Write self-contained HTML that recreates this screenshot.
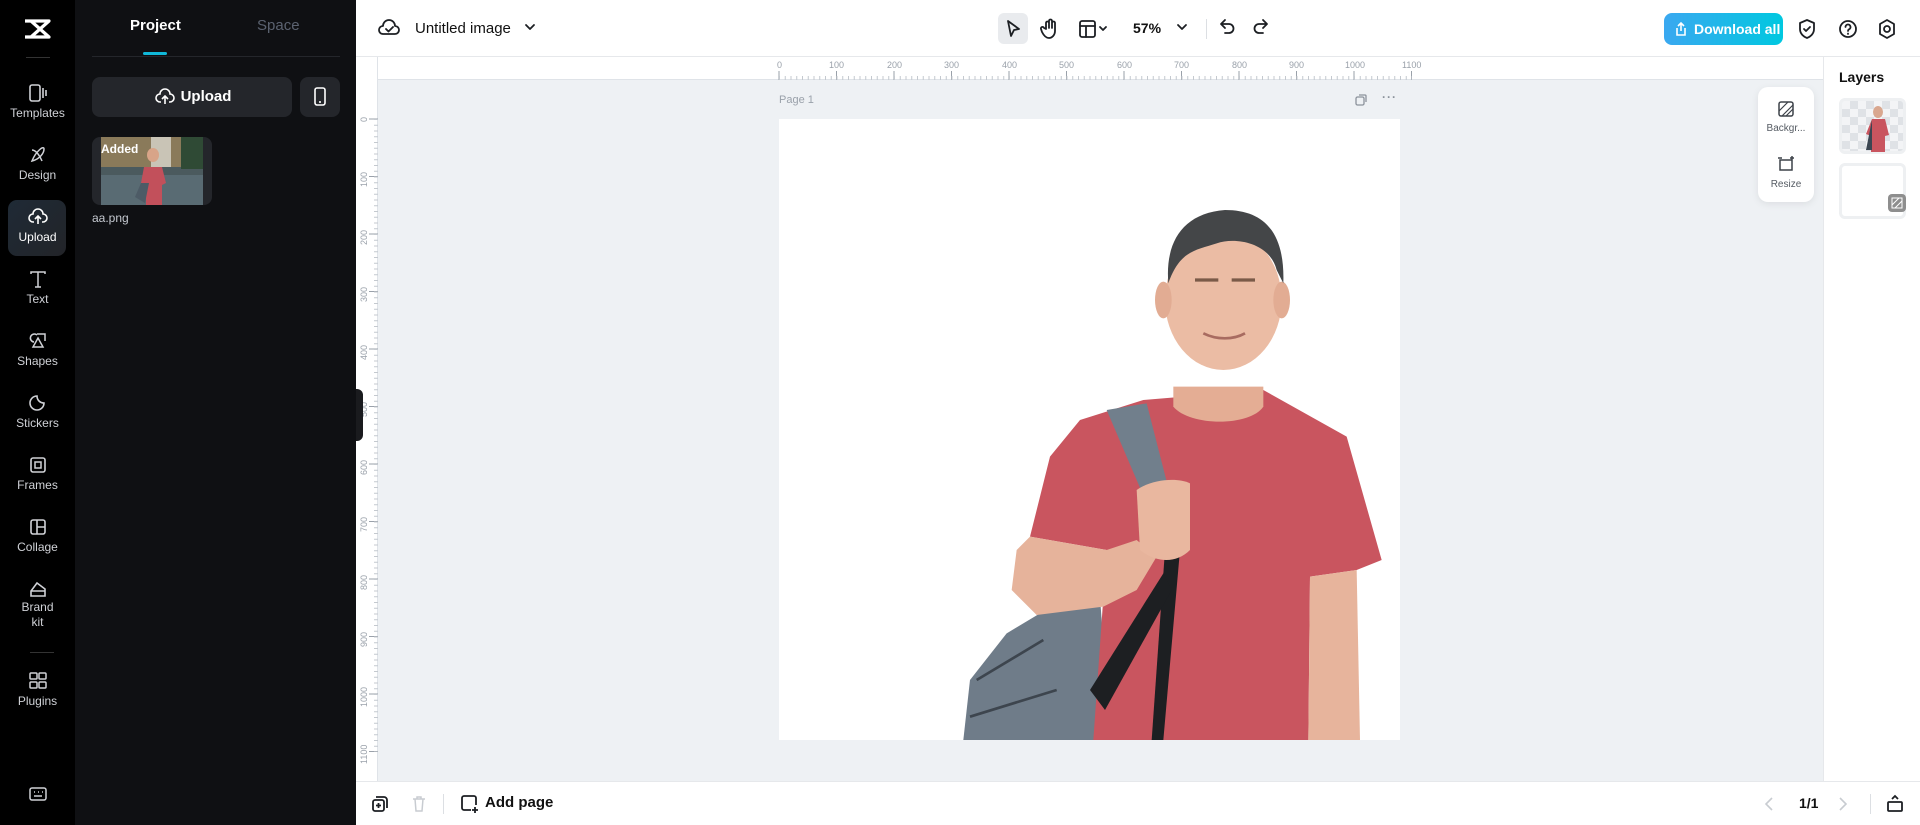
<!DOCTYPE html>
<html><head><meta charset="utf-8"><style>
*{box-sizing:border-box;margin:0;padding:0}
body{width:1920px;height:825px;overflow:hidden;position:relative;font-family:"Liberation Sans",sans-serif;background:#eef1f4}
.a{position:absolute}
.nav{left:0;top:0;width:75px;height:825px;background:#000}
.ni{position:absolute;left:0;width:75px;text-align:center;color:#cfd1d6;font-size:12px}
.ni svg{display:block;margin:0 auto 4px}
.panel{left:75px;top:0;width:281px;height:825px;background:#0f1013}
.top{left:356px;top:0;width:1564px;height:57px;background:#fff;border-bottom:1px solid #e6e8eb}
.tx{font-size:15px;color:#111}
.ic{stroke:#1c1f23;fill:none;stroke-width:1.8;stroke-linecap:round;stroke-linejoin:round}
.bottom{left:356px;top:781px;width:1564px;height:44px;background:#fff;border-top:1px solid #e6e8eb}
.rp{left:1823px;top:57px;width:97px;height:724px;background:#fff;border-left:1px solid #e6e8eb}
</style></head><body>
<div class="a nav">
 <svg class="a" style="left:22px;top:18px" width="30" height="22" viewBox="0 0 30 22"><path d="M3 3h24L9 19h18M3 19h24L9 3" fill="none" stroke="#fff" stroke-width="3.2" stroke-linejoin="round"/></svg>
 <div class="a" style="left:26px;top:57px;width:24px;height:1px;background:#333"></div>
 <div class="ni" style="top:84px"><svg width="20" height="18" viewBox="0 0 20 18"><rect x="2" y="1" width="10" height="16" rx="2" fill="none" stroke="#cfd1d6" stroke-width="1.6"/><path d="M15 4v10M18 6v6" stroke="#cfd1d6" stroke-width="1.6"/></svg>Templates</div>
 <div class="ni" style="top:146px"><svg width="20" height="18" viewBox="0 0 20 18"><path d="M4 15c8-2 12-8 12-12S8 5 4 15zM4 4c4 0 8 6 10 11" fill="none" stroke="#cfd1d6" stroke-width="1.5"/></svg>Design</div>
 <div class="a" style="left:8px;top:200px;width:58px;height:56px;border-radius:9px;background:linear-gradient(135deg,#1f2a36,#222428)"></div>
 <div class="ni" style="top:208px;color:#fff"><svg width="20" height="18" viewBox="0 0 20 18"><path d="M6 14H5a4 4 0 0 1 0-8 5 5 0 0 1 10 0 4 4 0 0 1 0 8h-1M10 16V9M7 11l3-3 3 3" fill="none" stroke="#fff" stroke-width="1.6"/></svg>Upload</div>
 <div class="ni" style="top:270px"><svg width="20" height="18" viewBox="0 0 20 18"><path d="M3 4V2h14v2M10 2v15M7 17h6" fill="none" stroke="#cfd1d6" stroke-width="1.5"/></svg>Text</div>
 <div class="ni" style="top:332px"><svg width="20" height="18" viewBox="0 0 20 18"><path d="M6 10a4 4 0 1 1 3-7M9 2h8v7M10 6l5 9H5z" fill="none" stroke="#cfd1d6" stroke-width="1.5"/></svg>Shapes</div>
 <div class="ni" style="top:394px"><svg width="20" height="18" viewBox="0 0 20 18"><path d="M16 9a7 7 0 1 1-7-7c0 4 3 7 7 7z" fill="none" stroke="#cfd1d6" stroke-width="1.6"/></svg>Stickers</div>
 <div class="ni" style="top:456px"><svg width="20" height="18" viewBox="0 0 20 18"><rect x="3" y="2" width="14" height="14" rx="2" fill="none" stroke="#cfd1d6" stroke-width="1.6"/><rect x="7" y="6" width="6" height="6" fill="none" stroke="#cfd1d6" stroke-width="1.5"/></svg>Frames</div>
 <div class="ni" style="top:518px"><svg width="20" height="18" viewBox="0 0 20 18"><rect x="3" y="2" width="14" height="14" rx="2" fill="none" stroke="#cfd1d6" stroke-width="1.6"/><path d="M9 2v14M9 9h8" stroke="#cfd1d6" stroke-width="1.6"/></svg>Collage</div>
 <div class="ni" style="top:580px;line-height:15px"><svg width="20" height="18" viewBox="0 0 20 18" style="margin-bottom:2px"><path d="M3 16V11l6-8 8 6v7zM3 11h14" fill="none" stroke="#cfd1d6" stroke-width="1.6"/></svg>Brand<br>kit</div>
 <div class="a" style="left:30px;top:652px;width:24px;height:1px;background:#333"></div>
 <div class="ni" style="top:672px"><svg width="20" height="18" viewBox="0 0 20 18"><rect x="2" y="1" width="7" height="6" rx="1" fill="none" stroke="#cfd1d6" stroke-width="1.5"/><rect x="11" y="1" width="7" height="6" rx="1" fill="none" stroke="#cfd1d6" stroke-width="1.5"/><rect x="2" y="10" width="7" height="6" rx="1" fill="none" stroke="#cfd1d6" stroke-width="1.5"/><rect x="11" y="10" width="7" height="6" rx="1" fill="none" stroke="#cfd1d6" stroke-width="1.5"/></svg>Plugins</div>
 <svg class="a" style="left:28px;top:786px" width="20" height="16" viewBox="0 0 20 16"><rect x="2" y="2" width="16" height="12" rx="2" fill="none" stroke="#cfd1d6" stroke-width="1.5"/><path d="M6 6h1M10 6h1M14 6h1M6 10h8" stroke="#cfd1d6" stroke-width="1.5"/></svg>
</div>
<div class="a panel">
 <div class="a" style="left:55px;top:17px;width:50px;font-size:15px;font-weight:bold;color:#fff">Project</div>
 <div class="a" style="left:182px;top:17px;font-size:15px;color:#5b6270">Space</div>
 <div class="a" style="left:68px;top:52px;width:24px;height:3px;background:#10b8d8;border-radius:2px"></div>
 <div class="a" style="left:17px;top:56px;width:248px;height:1px;background:#24262b"></div>
 <div class="a" style="left:17px;top:77px;width:200px;height:40px;border-radius:8px;background:#24262b;color:#fff;font-weight:bold;font-size:15px;line-height:40px;text-align:center;padding-left:28px">Upload</div>
 <svg class="a" style="left:80px;top:88px" width="20" height="18" viewBox="0 0 20 18"><path d="M6 14H5a4 4 0 0 1 0-8 5 5 0 0 1 10 0 4 4 0 0 1 0 8h-1M10 16V9M7 11l3-3 3 3" fill="none" stroke="#fff" stroke-width="1.6"/></svg>
 <div class="a" style="left:225px;top:77px;width:40px;height:40px;border-radius:8px;background:#24262b"></div>
 <svg class="a" style="left:237px;top:86px" width="16" height="22" viewBox="0 0 16 22"><rect x="3" y="2" width="10" height="17" rx="2" fill="none" stroke="#fff" stroke-width="1.6"/><path d="M7 16h2" stroke="#fff" stroke-width="1.6"/></svg>
 <div class="a" style="left:17px;top:137px;width:120px;height:68px;border-radius:8px;background:#24262b"></div>
 <svg class="a" style="left:26px;top:137px" width="102" height="68" viewBox="0 0 102 68"><rect width="102" height="68" fill="#4b5a5e"/><rect width="102" height="30" fill="#8a7a5a"/><rect x="50" y="0" width="20" height="30" fill="#c9c4b6"/><rect x="80" y="0" width="22" height="32" fill="#2f4a35"/><rect y="38" width="102" height="30" fill="#596b73"/><ellipse cx="52" cy="18" rx="6" ry="7" fill="#d8a488"/><path d="M43 30h18l4 16-4 2v20H45V48l-5-2z" fill="#c2505b"/><path d="M40 46l-6 14 10 6 4-20z" fill="#4d5b66"/></svg>
 <div class="a" style="left:26px;top:142px;color:#fff;font-weight:bold;font-size:12px">Added</div>
 <div class="a" style="left:17px;top:211px;color:#c5c9d0;font-size:12px">aa.png</div>
</div>
<div class="a" style="left:356px;top:389px;width:7px;height:52px;background:#1a1b1e;border-radius:0 6px 6px 0;z-index:5"></div>

<div class="a top">
 <svg class="a" style="left:22px;top:18px" width="22" height="20" viewBox="0 0 22 20"><path d="M6 16H5a4 4 0 0 1 0-8 6 6 0 0 1 12 0 4 4 0 0 1 0 8zM8 11l2.5 2.5L15 9" class="ic"/></svg>
 <div class="a tx" style="left:59px;top:20px">Untitled image</div>
 <svg class="a" style="left:168px;top:22px" width="12" height="10" viewBox="0 0 12 10"><path d="M2 3l4 4 4-4" class="ic"/></svg>
 <div class="a" style="left:642px;top:13px;width:30px;height:31px;border-radius:6px;background:#e9ebee"></div>
 <svg class="a" style="left:648px;top:19px" width="18" height="20" viewBox="0 0 18 20"><path d="M4 2l11 8-5 1-3 6z" class="ic"/></svg>
 <svg class="a" style="left:684px;top:18px" width="20" height="22" viewBox="0 0 20 22"><path d="M6 11V5a1.5 1.5 0 0 1 3 0v5V3a1.5 1.5 0 0 1 3 0v7V5a1.5 1.5 0 0 1 3 0v8c0 4-3 7-6 7s-5-2-7-6l-1-3a1.5 1.5 0 0 1 3-1z" class="ic" stroke-width="1.5"/></svg>
 <svg class="a" style="left:722px;top:19px" width="32" height="20" viewBox="0 0 32 20"><rect x="2" y="2" width="15" height="16" rx="2" class="ic"/><path d="M2 7h15M8 7v11M22 8l3 3 3-3" class="ic"/></svg>
 <div class="a tx" style="left:777px;top:20px;font-weight:bold;font-size:14px">57%</div>
 <svg class="a" style="left:820px;top:22px" width="12" height="10" viewBox="0 0 12 10"><path d="M2 3l4 4 4-4" class="ic"/></svg>
 <div class="a" style="left:850px;top:19px;width:1px;height:20px;background:#dcdfe3"></div>
 <svg class="a" style="left:862px;top:18px" width="18" height="20" viewBox="0 0 18 20"><path d="M4 6h7a4 4 0 0 1 0 9H7M7 2L3 6l4 4" class="ic"/></svg>
 <svg class="a" style="left:896px;top:18px" width="18" height="20" viewBox="0 0 18 20"><path d="M14 6H7a4 4 0 0 0 0 9h4M11 2l4 4-4 4" class="ic" stroke="#cfd3d8"/></svg>
 <div class="a" style="left:1308px;top:13px;width:119px;height:32px;border-radius:8px;background:linear-gradient(90deg,#3aa8f0,#00c8e0);color:#fff;font-weight:bold;font-size:14px;line-height:32px;padding-left:30px">Download all</div>
 <svg class="a" style="left:1318px;top:21px" width="14" height="16" viewBox="0 0 14 16"><path d="M3 7v7h8V7M7 10V2M4 5l3-3 3 3" fill="none" stroke="#fff" stroke-width="1.6"/></svg>
 <svg class="a" style="left:1441px;top:18px" width="20" height="22" viewBox="0 0 20 22"><path d="M10 2l7 3v6c0 5-4 8-7 9-3-1-7-4-7-9V5zM7 11l2 2 4-4" class="ic"/></svg>
 <svg class="a" style="left:1482px;top:18px" width="20" height="22" viewBox="0 0 20 22"><circle cx="10" cy="11" r="8" class="ic"/><path d="M7.5 9a2.5 2.5 0 1 1 3.5 2.3c-.7.4-1 .9-1 1.7M10 15.5v.5" class="ic"/></svg>
 <svg class="a" style="left:1521px;top:18px" width="20" height="22" viewBox="0 0 20 22"><path d="M10 2l7 4v10l-7 4-7-4V6z" class="ic"/><circle cx="10" cy="11" r="3" class="ic"/></svg>
</div>

<div class="a" style="left:356px;top:57px;width:1467px;height:23px;background:#fff;border-bottom:1px solid #dfe3e8"></div>
<div class="a" style="left:356px;top:57px;width:22px;height:724px;background:#fff;border-right:1px solid #dfe3e8"></div>
<svg class="a" style="left:356px;top:57px" width="1467" height="724" font-family="Liberation Sans" font-size="9" fill="#9aa1aa">
<g stroke="#9aa1aa" stroke-width="1">
 <path d="M423 23v-9M480.5 23v-9M538 23v-9M595.5 23v-9M653 23v-9M710.5 23v-9M768 23v-9M825.5 23v-9M883 23v-9M940.5 23v-9M998 23v-9M1055.5 23v-9"/>
 <path d="M423 21h633" stroke-dasharray="1 4.75" stroke-width="4" stroke="#c4c9cf"/>
 <path d="M22 62h-9M22 119.5h-9M22 177h-9M22 234.5h-9M22 292h-9M22 349.5h-9M22 407h-9M22 464.5h-9M22 522h-9M22 579.5h-9M22 637h-9M22 694.5h-9"/>
 <path d="M20 62v633" stroke-dasharray="1 4.75" stroke-width="4" stroke="#c4c9cf"/>
</g>
<g><text x="421" y="11">0</text><text x="473" y="11">100</text><text x="531" y="11">200</text><text x="588" y="11">300</text><text x="646" y="11">400</text><text x="703" y="11">500</text><text x="761" y="11">600</text><text x="818" y="11">700</text><text x="876" y="11">800</text><text x="933" y="11">900</text><text x="989" y="11">1000</text><text x="1046" y="11">1100</text></g>
<g><text transform="translate(11,65) rotate(-90)">0</text><text transform="translate(11,130) rotate(-90)">100</text><text transform="translate(11,188) rotate(-90)">200</text><text transform="translate(11,245) rotate(-90)">300</text><text transform="translate(11,303) rotate(-90)">400</text><text transform="translate(11,360) rotate(-90)">500</text><text transform="translate(11,418) rotate(-90)">600</text><text transform="translate(11,475) rotate(-90)">700</text><text transform="translate(11,533) rotate(-90)">800</text><text transform="translate(11,590) rotate(-90)">900</text><text transform="translate(11,650) rotate(-90)">1000</text><text transform="translate(11,707) rotate(-90)">1100</text></g>
</svg>

<div class="a" style="left:779px;top:94px;font-size:11px;color:#9aa1aa">Page 1</div>
<svg class="a" style="left:1354px;top:93px" width="14" height="14" viewBox="0 0 14 14"><rect x="2" y="4" width="8" height="8" rx="1.5" fill="none" stroke="#8b929b" stroke-width="1.3"/><path d="M5 2h6a1 1 0 0 1 1 1v6" fill="none" stroke="#8b929b" stroke-width="1.3"/></svg>
<div class="a" style="left:1382px;top:90px;font-size:12px;color:#8b929b;letter-spacing:1px;font-weight:bold">···</div>

<div class="a" style="left:779px;top:119px;width:621px;height:621px;background:#fff;overflow:hidden">
<svg class="a" style="left:171px;top:71px" width="450" height="550" viewBox="0 0 1350 1650">
 <path d="M40 1650L60 1470 170 1330 270 1270 450 1220 480 1650z" fill="#6f7c89"/>
 <path d="M80 1470l200-120M60 1580l260-80" stroke="#3d454e" stroke-width="8" fill="none"/>
 <path d="M580 630L940 600 1190 740 1295 1110 1220 1140 1080 1160 1075 1650 430 1650 470 1080 240 1040 300 800 390 690z" fill="#c9555f"/>
 <path d="M1220 1140L1080 1160 1075 1650 1230 1650z" fill="#e7b49c"/>
 <path d="M240 1040L470 1080 560 1050 620 1100 560 1200 460 1250 260 1275 185 1200 200 1080z" fill="#e6b39b"/>
 <path d="M470 660L590 640 700 1070 650 1080z" fill="#717f8c"/>
 <path d="M645 1080h45l-50 570h-35z" fill="#1d1f22"/>
 <path d="M420 1500L640 1150 665 1200 465 1560z" fill="#1d1f22"/>
 <path d="M560 900c40-30 120-40 160-20v200c-40 40-100 40-150 0z" fill="#e9b79f"/>
 <path d="M670 590h270v60c-40 60-220 60-270 0z" fill="#e4ad94"/>
 <ellipse cx="820" cy="330" rx="175" ry="210" fill="#ebbca4"/>
 <ellipse cx="640" cy="330" rx="25" ry="55" fill="#e2ac93"/><ellipse cx="995" cy="330" rx="25" ry="55" fill="#e2ac93"/>
 <path d="M655 280c-10-120 40-210 170-220 120 0 180 70 175 220l-20-40c-20-80-120-100-180-80-60 20-110 20-145 120z" fill="#444648"/>
 <path d="M735 270h70M845 270h70" stroke="#7a5a48" stroke-width="10"/>
 <path d="M760 430c40 20 90 20 125 0" stroke="#a86b60" stroke-width="8" fill="none"/>
</svg>
</div>

<div class="a" style="left:1758px;top:87px;width:56px;height:115px;background:#fff;border-radius:10px;box-shadow:0 2px 8px rgba(0,0,0,.08)"></div>
<svg class="a" style="left:1777px;top:100px" width="18" height="18" viewBox="0 0 18 18"><rect x="2" y="2" width="14" height="14" rx="2" fill="none" stroke="#3d4249" stroke-width="1.5"/><path d="M5 16L16 5M2 11l9-9M9 16l7-7" stroke="#3d4249" stroke-width="1.2"/></svg>
<div class="a" style="left:1758px;top:123px;width:56px;text-align:center;font-size:10px;color:#555b63">Backgr...</div>
<svg class="a" style="left:1777px;top:155px" width="18" height="18" viewBox="0 0 18 18"><path d="M3 5v10h12V5zM1 3h4M13 3h4M15 1v4" fill="none" stroke="#3d4249" stroke-width="1.5"/></svg>
<div class="a" style="left:1758px;top:179px;width:56px;text-align:center;font-size:10px;color:#555b63">Resize</div>

<div class="a rp">
 <div class="a" style="left:15px;top:12px;font-size:14px;font-weight:bold;color:#111">Layers</div>
 <div class="a" style="left:15px;top:41px;width:67px;height:56px;border-radius:6px;background:repeating-conic-gradient(#dfe2e6 0 25%,#f3f4f6 0 50%) 0 0/16px 16px;border:3px solid #eef0f2"></div>
 <svg class="a" style="left:40px;top:47px" width="26" height="48" viewBox="0 0 26 48"><ellipse cx="14" cy="8" rx="5" ry="6" fill="#d9a78f"/><path d="M8 15h13l4 16-4 1v16H7V32l-5-2z" fill="#c9555f"/><path d="M8 16l-6 30h6z" fill="#3b4652"/></svg>
 <div class="a" style="left:15px;top:106px;width:67px;height:56px;border-radius:6px;background:#fff;border:3px solid #eef0f2"></div>
 <div class="a" style="left:64px;top:137px;width:18px;height:18px;border-radius:4px;background:#8e8e8e"></div>
 <svg class="a" style="left:67px;top:140px" width="12" height="12" viewBox="0 0 12 12"><rect x="1" y="1" width="10" height="10" fill="none" stroke="#fff"/><path d="M1 8l7-7M4 11l7-7" stroke="#fff"/></svg>
</div>

<div class="a bottom">
 <svg class="a" style="left:15px;top:13px" width="18" height="18" viewBox="0 0 18 18"><rect x="2" y="5" width="11" height="11" rx="2" fill="none" stroke="#1c1f23" stroke-width="1.8"/><path d="M5 2h8a3 3 0 0 1 3 3v8M7.5 8v5M5 10.5h5" fill="none" stroke="#1c1f23" stroke-width="1.8"/></svg>
 <svg class="a" style="left:55px;top:13px" width="16" height="18" viewBox="0 0 16 18"><path d="M2 4h12M6 4V2h4v2M4 4l1 12h6l1-12" fill="none" stroke="#c8ccd1" stroke-width="1.5"/></svg>
 <div class="a" style="left:87px;top:12px;width:1px;height:20px;background:#dcdfe3"></div>
 <svg class="a" style="left:104px;top:12px" width="20" height="20" viewBox="0 0 20 20"><path d="M11 16H4a2 2 0 0 1-2-2V4a2 2 0 0 1 2-2h10a2 2 0 0 1 2 2v7M15 13v6M12 16h6" fill="none" stroke="#1c1f23" stroke-width="1.8"/></svg>
 <div class="a" style="left:129px;top:12px;font-size:15px;font-weight:bold;color:#111">Add page</div>
 <svg class="a" style="left:1408px;top:14px" width="10" height="16" viewBox="0 0 10 16"><path d="M8 2L2 8l6 6" fill="none" stroke="#c8ccd1" stroke-width="1.6"/></svg>
 <div class="a" style="left:1443px;top:13px;font-size:14px;font-weight:bold;color:#111">1/1</div>
 <svg class="a" style="left:1482px;top:14px" width="10" height="16" viewBox="0 0 10 16"><path d="M2 2l6 6-6 6" fill="none" stroke="#c8ccd1" stroke-width="1.6"/></svg>
 <div class="a" style="left:1514px;top:12px;width:1px;height:20px;background:#dcdfe3"></div>
 <svg class="a" style="left:1530px;top:11px" width="18" height="20" viewBox="0 0 18 20"><rect x="2" y="9" width="14" height="9" rx="1" fill="none" stroke="#1c1f23" stroke-width="1.8"/><path d="M6 6l3-3 3 3" fill="none" stroke="#1c1f23" stroke-width="1.8"/></svg>
</div>
</body></html>
